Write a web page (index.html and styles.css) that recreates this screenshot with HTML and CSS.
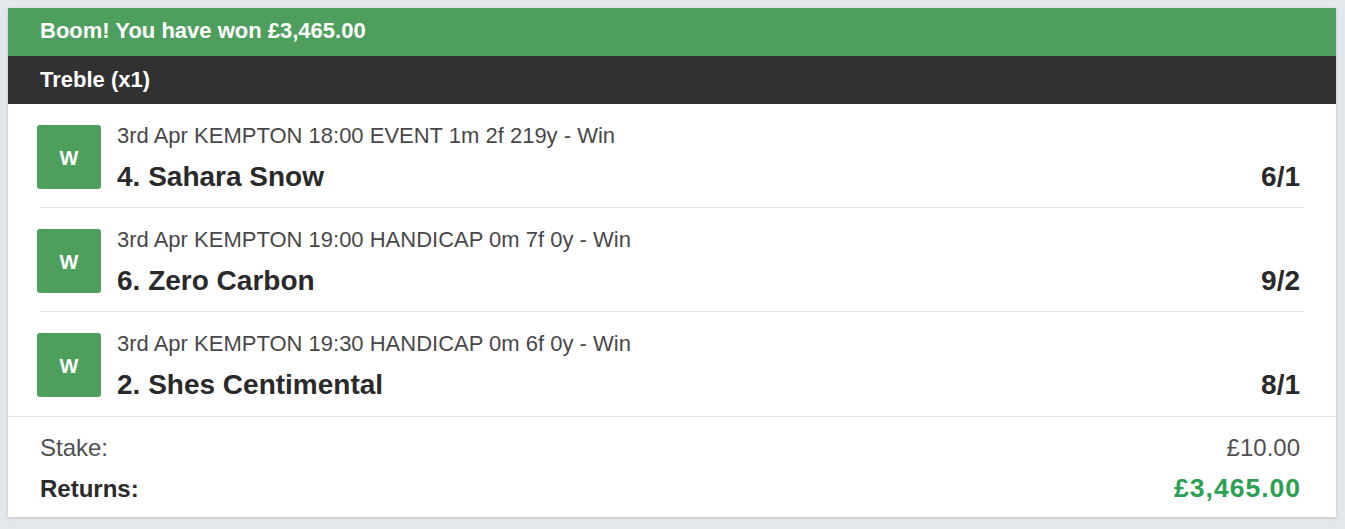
FILE: index.html
```html
<!DOCTYPE html>
<html lang="en">
<head>
<meta charset="utf-8">
<title>Bet receipt</title>
<link rel="stylesheet" href="styles.css">
</head>
<body>
<div class="card">
  <div class="banner">Boom! You have won £3,465.00</div>
  <div class="bet-type">Treble (x1)</div>
  <div class="selections">
    <div class="sel">
      <div class="badge">W</div>
      <div class="sel-body">
        <div class="meta">3rd Apr KEMPTON 18:00 EVENT 1m 2f 219y - Win</div>
        <div class="name-line"><span class="name">4. Sahara Snow</span><span class="odds">6/1</span></div>
      </div>
    </div>
    <div class="sel">
      <div class="badge">W</div>
      <div class="sel-body">
        <div class="meta">3rd Apr KEMPTON 19:00 HANDICAP 0m 7f 0y - Win</div>
        <div class="name-line"><span class="name">6. Zero Carbon</span><span class="odds">9/2</span></div>
      </div>
    </div>
    <div class="sel last">
      <div class="badge">W</div>
      <div class="sel-body">
        <div class="meta">3rd Apr KEMPTON 19:30 HANDICAP 0m 6f 0y - Win</div>
        <div class="name-line"><span class="name">2. Shes Centimental</span><span class="odds">8/1</span></div>
      </div>
    </div>
  </div>
  <div class="summary">
    <div class="sum-row stake"><span>Stake:</span><span>£10.00</span></div>
    <div class="sum-row returns"><span>Returns:</span><span class="ret-val">£3,465.00</span></div>
  </div>
</div>
</body>
</html>
```
FILE: styles.css
```css
html, body {
  margin: 0;
  padding: 0;
}
body {
  background: #e4e7eb;
  font-family: "Liberation Sans", Arial, Helvetica, sans-serif;
  padding: 8px 9px 8px 8px;
}
.card {
  background: #ffffff;
  box-shadow: 0 1px 3px rgba(0, 0, 0, 0.16);
}
.banner {
  background: #4e9f5d;
  color: #ffffff;
  font-weight: bold;
  font-size: 22px;
  height: 48px;
  line-height: 46px;
  padding: 0 32px;
}
.bet-type {
  background: #313131;
  color: #ffffff;
  font-weight: bold;
  font-size: 22px;
  height: 48px;
  line-height: 48px;
  padding: 0 32px;
}
.selections {
  border-bottom: 1px solid #dfe3e7;
}
.sel {
  display: flex;
  align-items: center;
  gap: 16px;
  margin: 0 32px;
  height: 103px;
  border-bottom: 1px solid #dfe3e7;
}
.sel.last {
  border-bottom: none;
  height: 104px;
}
.badge {
  flex: none;
  width: 64px;
  height: 64px;
  margin-left: -3px;
  margin-top: 2px;
  background: #4e9f5d;
  border-radius: 3px;
  color: #ffffff;
  font-weight: bold;
  font-size: 20px;
  padding-top: 3px;
  box-sizing: border-box;
  display: flex;
  align-items: center;
  justify-content: center;
}
.sel-body {
  flex: 1;
  display: flex;
  flex-direction: column;
  gap: 12px;
  padding-top: 4px;
  padding-right: 4px;
}
.meta {
  font-size: 22px;
  line-height: 26px;
  color: #484848;
}
.name-line {
  display: flex;
  justify-content: space-between;
  align-items: baseline;
  font-size: 28px;
  font-weight: bold;
  line-height: 32px;
  color: #2a2a2a;
}
.summary {
  padding: 11px 36px 9px 32px;
}
.sum-row {
  display: flex;
  justify-content: space-between;
  align-items: baseline;
  height: 40px;
  line-height: 40px;
  font-size: 24px;
}
.stake {
  color: #505050;
}
.returns {
  font-weight: bold;
  color: #2a2a2a;
}
.ret-val {
  color: #2aa052;
  font-size: 26.5px;
  letter-spacing: 1px;
  margin-right: -1px;
}
```
